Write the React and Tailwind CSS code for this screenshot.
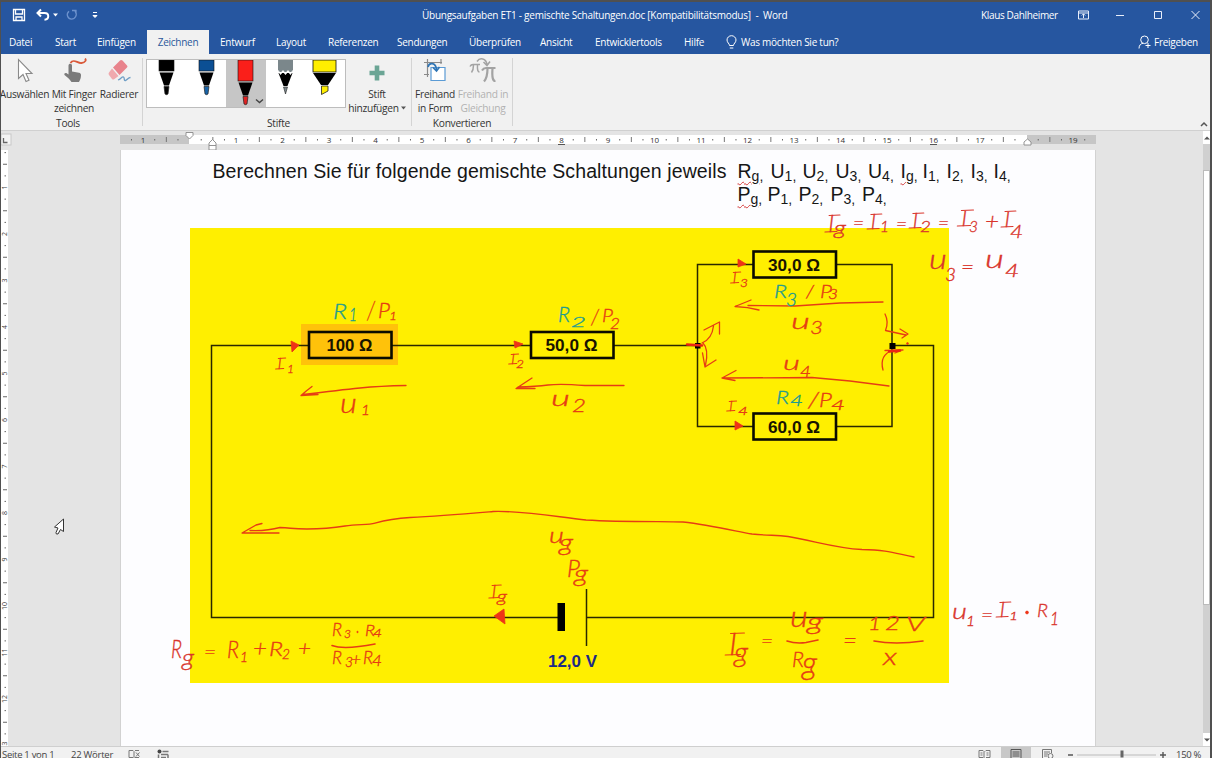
import React from "react";

const RED = "#e63c14";
const DARK = "#d9352c";
const TEAL = "#1f9c90";

const UI = "font-['Open_Sans',sans-serif]";

/* ---------- title bar and tabs ---------- */

function TitleBar() {
  return (
    <div className="flex h-[26px] shrink-0 items-center text-[10px] text-white">
      <svg className="ml-[11px] h-[14px] w-[86px] shrink-0" viewBox="0 0 86 14" fill="none" stroke="#fff">
        <path d="M1.500 1.500h11v11h-11zM3.500 1.500v4.500h7v-4.500M4 12.500v-3.500h6v3.500" strokeWidth="1.300" />
        <path d="M29 1.500l-3.500 3.500 3.500 3.500M26 5h6.500c5 0 5 6.500 0 6.800" strokeWidth="2" />
        <path d="M41 5.500h5l-2.500 3z" fill="#fff" stroke="none" />
        <path d="M57 3.200c-3.500 3-1 8 2.500 8s6.500-4.500 3.500-8M60 2.500h4v3.500" stroke="#6d92cd" strokeWidth="1.300" />
        <path d="M81 4.500h4M81 7.500h4l-2 2z" fill="#fff" strokeWidth="1" />
      </svg>
      <div className="ml-[324px] w-[366px] whitespace-pre tracking-[-0.26px]">
        Übungsaufgaben ET1 - gemischte Schaltungen.doc [Kompatibilitätsmodus]{"  -  "}Word
      </div>
      <div className="ml-[193px] w-[78px] whitespace-nowrap tracking-[-0.35px]">Klaus Dahlheimer</div>
      <svg className="ml-[19px] h-[14px] w-[130px] shrink-0" viewBox="0 0 130 14" fill="none" stroke="#e8eefa">
        <path d="M.5 3h10v8h-10zM.5 5h10M5.500 10v-4M3.800 7.500l1.700-1.700 1.700 1.700" strokeWidth="1" />
        <path d="M38 7.500h8M76.500 3.500h7v7h-7zM113.500 3l8 8M121.500 3l-8 8" strokeWidth="1" />
      </svg>
    </div>
  );
}

function Tab({ className, children }) {
  return <div className={"flex h-[24px] shrink-0 items-center whitespace-nowrap " + className}>{children}</div>;
}

function TabRow() {
  return (
    <div className="flex h-[26px] shrink-0 items-end text-[10px] tracking-[-0.26px] text-white">
      <Tab className="ml-2 w-[46px]">Datei</Tab>
      <Tab className="w-[42px]">Start</Tab>
      <Tab className="w-[50px]">Einfügen</Tab>
      <Tab className="w-[62px] justify-center bg-[#f1f1f1] text-[#2b579a]">Zeichnen</Tab>
      <Tab className="ml-[11px] w-[56px]">Entwurf</Tab>
      <Tab className="w-[52px]">Layout</Tab>
      <Tab className="w-[69px]">Referenzen</Tab>
      <Tab className="w-[72px]">Sendungen</Tab>
      <Tab className="w-[71px]">Überprüfen</Tab>
      <Tab className="w-[55px]">Ansicht</Tab>
      <Tab className="w-[89px]">Entwicklertools</Tab>
      <Tab className="w-[42px]">Hilfe</Tab>
      <Tab className="w-[412px]">
        <svg className="mr-[4px] h-[15px] w-[11px]" viewBox="0 0 11 15" fill="none" stroke="#fff">
          <path d="M3.500 10.500c0-2-2.500-2.800-2.500-5.500a4.500 4.300 0 0 1 9 0c0 2.700-2.500 3.500-2.500 5.500zM3.800 13h3.500" />
        </svg>
        Was möchten Sie tun?
      </Tab>
      <Tab className="">
        <svg className="mr-[3px] h-[14px] w-[13px]" viewBox="0 0 13 14" fill="none" stroke="#fff">
          <circle cx="6.500" cy="4.800" r="3.800" />
          <path d="M1 13.500c0-3.500 2-5 4-5.200M10 8v5M7.500 10.500h5" />
        </svg>
        Freigeben
      </Tab>
    </div>
  );
}

/* ---------- ribbon ---------- */

function Tool({ className, icon, children }) {
  return (
    <div className={"flex shrink-0 flex-col items-center text-center " + className}>
      <div className="flex h-[34px] items-center">{icon}</div>
      <div className="whitespace-nowrap leading-[13.5px]">{children}</div>
    </div>
  );
}

function Group({ className, label, children }) {
  return (
    <div className={"flex h-[76px] shrink-0 flex-col " + className}>
      <div className="flex h-[63px] shrink-0">{children}</div>
      <div className="text-center leading-[13px]">{label}</div>
    </div>
  );
}

function Separator() {
  return <div className="mt-1 h-[68px] w-px shrink-0 bg-[#d4d4d4]" />;
}

function Pen({ color, tip, kind, selected }) {
  const d = selected ? 10 : 0;
  return (
    <div className={"flex w-[39.500px] shrink-0 justify-center " + (selected ? "bg-[#c6c6c6]" : "")}>
      <svg className="h-[47px] w-[39px]" viewBox="0 0 39 47">
        {kind === "pen" && (
          <g>
            <rect x="12" y="0" width="15" height={11 + d} fill={color} stroke="#111" strokeWidth=".6" />
            <path transform={`translate(0 ${d})`} d="M12.500 12.500h14l-4.500 13h-5z" fill="#000" />
            <path transform={`translate(0 ${d})`} d="M17 26.500h5l-1 7.500q-1.500 1.300-3 0z" fill={tip} stroke="#222" strokeWidth=".7" />
          </g>
        )}
        {kind === "pencil" && (
          <g>
            <rect x="12" y="0" width="15" height="12" fill="#7b878b" />
            <path d="M12.500 13l14 0-5 13h-4z" fill="#000" />
            <path d="M12 10.500l2.500 3.500 2.500-3 2.500 3 2.500-3 2.500 3 2.500-3.500" fill="none" stroke="#fff" strokeWidth="1.200" />
            <path d="M17.500 27h4l-2 7z" fill="#7b878b" stroke="#222" strokeWidth=".6" />
          </g>
        )}
        {kind === "marker" && (
          <g>
            <rect x="8" y="0" width="23" height="12" fill="#ffee00" stroke="#111" strokeWidth=".8" />
            <path d="M8 13h23l-8 12h-7z" fill="#000" />
            <path d="M16.500 26h6.500v5l-6.500 3.500z" fill="#ffee00" stroke="#222" strokeWidth=".8" />
          </g>
        )}
        {selected && <path d="M30 39.500l3.500 3 3.500-3" fill="none" stroke="#444" strokeWidth="1.400" />}
      </svg>
    </div>
  );
}

function Ribbon() {
  return (
    <div className="flex h-[77px] shrink-0 border-b border-[#d0d0d0] bg-[#f1f1f1] text-[10.200px] tracking-[-0.28px] text-[#333]">
      <Group className="w-[141px] pr-[7px]" label="Tools">
        <Tool
          className="-ml-px w-[49px]"
          icon={
            <svg className="h-[26px] w-[18px]" viewBox="0 0 18 26">
              <path d="M2.500 1.500v19l4.500-4 3 7 3-1.300-3-6.700h6z" fill="#fff" stroke="#8a8a8a" strokeWidth="1.100" />
            </svg>
          }
        >
          Auswählen
        </Tool>
        <Tool
          className="ml-[2px] w-[46px]"
          icon={
            <svg className="h-[26px] w-[26px]" viewBox="0 0 26 26">
              <path d="M7.500 7.500c0-2.500 3.500-2.500 3.500 0v6l7 1.300c1.500.3 2 1.200 2 2.500 0 3-1 4.500-2 6.700h-7.500c-2-3-4-4.500-7-7-.8-1.500 1-2.500 2.500-1.500l1.500 1z" fill="#7b7b7b" />
              <path d="M9.500 5c3-5 7 .5 11 0s5-3 3.500-4.500" fill="none" stroke="#d9593a" strokeWidth="1.800" />
            </svg>
          }
        >
          Mit Finger
          <br />
          zeichnen
        </Tool>
        <Tool
          className="ml-[3px] w-[38px]"
          icon={
            <svg className="h-[26px] w-[26px]" viewBox="0 0 26 26">
              <path d="M14 2.500q1-1 2.500 0l4.500 5q1 1 0 2l-7.500 7.500-6.500-7.500z" fill="#e8838c" />
              <path d="M6 10.500l6.500 7.500-4 3q-1.500 1-2.500 0l-3-4q-1-1.500 0-2.500z" fill="#f0a9ae" />
              <path d="M12 22c3-1 4-4 5.500-3s0 4 2 3.500 2.500-3 5-3" fill="none" stroke="#6f9fc6" strokeWidth="1.300" />
            </svg>
          }
        >
          Radierer
        </Tool>
      </Group>
      <Separator />
      <Group className="w-[268px] pl-[3px]" label="Stifte">
        <div className="mt-[5px] flex h-[49px] w-[200px] border border-[#bdbdbd] bg-white">
          <Pen kind="pen" color="#000" tip="#000" />
          <Pen kind="pen" color="#0b4f94" tip="#1964a8" />
          <Pen kind="pen" color="#fa1f1a" tip="#e02222" selected />
          <Pen kind="pencil" />
          <Pen kind="marker" />
        </div>
        <Tool
          className="ml-[2px] w-[58px]"
          icon={
            <svg className="mt-1 h-[16px] w-[16px]" viewBox="0 0 16 16">
              <path d="M8 .5v15M.5 8h15" stroke="#6ba595" strokeWidth="4.600" />
            </svg>
          }
        >
          Stift
          <br />
          <span className="flex items-center gap-[2px]">
            hinzufügen
            <svg className="h-[4px] w-[5px]" viewBox="0 0 5 4">
              <path d="M0 .5h5L2.500 3.500z" fill="#555" />
            </svg>
          </span>
        </Tool>
      </Group>
      <Separator />
      <Group className="w-[100px]" label="Konvertieren">
        <Tool
          className="ml-px w-[44px]"
          icon={
            <svg className="h-[26px] w-[24px]" viewBox="0 0 24 26" fill="none">
              <path d="M4.500 1v18M1 4.500h18M18 1v5M1 16.500h5" stroke="#8a8a8a" strokeWidth="1.200" />
              <path d="M8 9.500h10l4 0v13h-14z" fill="#fff" stroke="#5b9bd5" strokeWidth="1.200" />
              <path d="M5 9c1-5 8-5 8.500 3M10 9.500l3.500 3.500 3-4" stroke="#2f75b5" strokeWidth="1.700" />
            </svg>
          }
        >
          Freihand
          <br />
          in Form
        </Tool>
        <Tool
          className="ml-px w-[50px] text-[#b1b1b1]"
          icon={
            <svg className="h-[28px] w-[28px]" viewBox="0 0 28 28" fill="none" stroke="#a3a3a3">
              <path d="M1 9.500q1-2 3-2h7M4.500 8q0 5-2 7.500M8.500 8q-.5 7 2 7" strokeWidth="1.500" />
              <path d="M13 13.500q1.500-2.500 4-2.500h9.500M18.500 11.500q0 9-3.500 13M23.500 11.500q-1 13 3 12.500" strokeWidth="2.200" />
              <path d="M8 4.500c3-4.500 9-3 10 3M14.500 5l3.500 3.500 3-4" strokeWidth="1.500" />
            </svg>
          }
        >
          Freihand in
          <br />
          Gleichung
        </Tool>
      </Group>
      <Separator />
      <div className="flex flex-1 items-end justify-end pr-[2px] pb-[3px]">
        <svg className="h-[6px] w-[8px]" viewBox="0 0 8 6">
          <path d="M1 5l3-3 3 3" fill="none" stroke="#555" strokeWidth="1.500" />
        </svg>
      </div>
    </div>
  );
}

/* ---------- rulers ---------- */

const CM = 46.5;

function HorizontalRuler() {
  const marks = [];
  for (let q = -6; q <= 77; q++) {
    const x = 189.600 + (q * CM) / 4;
    if (q === 0 || x < 120 || x > 1094) continue;
    if (q % 4 === 0) {
      const n = Math.abs(q / 4);
      if (n !== 18) marks.push(<text key={q} x={x} y="142.500" textAnchor="middle">{n}</text>);
    } else if (q % 2 === 0) marks.push(<path key={q} d={`M${x} 137v5`} stroke="#777" />);
    else marks.push(<path key={q} d={`M${x} 139v1.500`} stroke="#666" />);
  }
  return (
    <svg className="h-[19px] w-[1202px] shrink-0" viewBox="1 131 1202 19">
      <rect x="1" y="134" width="10" height="11" fill="#f4f4f4" stroke="#c8c8c8" />
      <path d="M3.500 138v4.500h4" fill="none" stroke="#666" strokeWidth="1.300" />
      <rect x="120" y="135" width="976" height="9" fill="#c6c6c6" />
      <rect x="189" y="135" width="838" height="9" fill="#fff" />
      <g fontFamily="Open Sans, sans-serif" fontSize="8" fill="#333">{marks}</g>
      <path d="M558 144.500h7M930 144.500h7" stroke="#555" />
      <path d="M186 132.500h7v3l-3.500 3.500-3.500-3.500z" fill="#fff" stroke="#888" strokeWidth=".9" />
      <path d="M209 150v-7l3.500-3.500 3.500 3.500v7zM209 145.500h7" fill="#fff" stroke="#888" strokeWidth=".9" />
      <path d="M1024 145v-3l3.500-3 3.500 3v3z" fill="#fff" stroke="#888" strokeWidth=".9" />
    </svg>
  );
}

function VerticalRuler() {
  const marks = [];
  for (let q = 1; q <= 52; q++) {
    const y = 141 + (q * CM) / 4;
    if (y < 151) continue;
    if (q % 4 === 0)
      marks.push(
        <text key={q} transform={`translate(7.300 ${y}) rotate(-90)`} textAnchor="middle">
          {q / 4}
        </text>
      );
    else if (q % 2 === 0) marks.push(<path key={q} d={`M3 ${y}h4`} stroke="#666" />);
    else marks.push(<path key={q} d={`M4.500 ${y}h1.500`} stroke="#666" />);
  }
  return (
    <svg className="h-[596px] w-[7px] shrink-0 bg-white" viewBox="1 150 7 596">
      <g fontFamily="Open Sans, sans-serif" fontSize="7" fill="#444">{marks}</g>
    </svg>
  );
}

/* ---------- circuit and ink notes ---------- */

/* Each note is [text, left, top, right, bottom, colour]. */
const NOTES = [
  ["R", 333, 303, 347, 319, TEAL], ["1", 349, 309, 357, 321, TEAL],
  ["/", 367, 301, 375, 320, RED], ["P", 378, 303, 390, 318, RED], ["1", 389, 311, 397, 320, RED],
  ["I", 275, 358, 287, 369, RED], ["1", 287, 364, 294, 373, RED],
  ["u", 340, 399, 357, 413, RED], ["1", 361, 405, 370, 415, RED],
  ["R", 558, 307, 570, 322, TEAL], ["2", 571, 317, 586, 327, TEAL],
  ["/", 591, 309, 599, 325, RED], ["P", 602, 309, 613, 322, RED], ["2", 610, 318, 620, 329, RED],
  ["I", 508, 354, 520, 364, RED], ["2", 516, 359, 524, 368, RED],
  ["u", 551, 395, 570, 406, RED], ["2", 572, 400, 586, 412, RED],
  ["I", 824, 215, 842, 232, DARK], ["g", 834, 224, 846, 239, DARK], ["=", 853, 223, 864, 0, DARK],
  ["I", 866, 214, 884, 229, DARK], ["1", 880, 221, 889, 232, DARK], ["=", 896, 224, 907, 0, DARK],
  ["I", 908, 213, 926, 228, DARK], ["2", 920, 221, 931, 232, DARK], ["=", 938, 223, 949, 0, DARK],
  ["I", 956, 210, 976, 226, DARK], ["3", 969, 221, 978, 232, DARK], ["+", 985, 221, 999, 0, DARK],
  ["I", 1000, 211, 1018, 227, DARK], ["4", 1010, 225, 1023, 238, DARK],
  ["u", 929, 255, 947, 269, DARK], ["3", 945, 269, 956, 281, DARK], ["=", 961, 266, 974, 0, DARK],
  ["u", 985, 255, 1004, 268, DARK], ["4", 1005, 265, 1019, 277, DARK],
  ["I", 730, 272, 742, 283, RED], ["3", 740, 278, 748, 287, RED],
  ["R", 774, 285, 787, 298, TEAL], ["3", 786, 294, 797, 306, TEAL],
  ["/", 806, 286, 814, 298, RED], ["P", 820, 285, 832, 298, RED], ["3", 828, 289, 838, 299, RED],
  ["u", 791, 318, 810, 329, RED], ["3", 810, 321, 823, 334, RED],
  ["u", 783, 360, 800, 370, RED], ["4", 800, 366, 811, 377, RED],
  ["R", 776, 391, 789, 404, TEAL], ["4", 790, 395, 803, 406, TEAL],
  ["/", 808, 393, 819, 408, RED], ["P", 819, 393, 832, 407, RED], ["4", 831, 400, 845, 410, RED],
  ["I", 726, 401, 738, 411, RED], ["4", 738, 406, 748, 415, RED],
  ["u", 549, 532, 564, 543, RED], ["g", 559, 538, 573, 556, RED],
  ["P", 567, 560, 580, 577, RED], ["g", 574, 570, 588, 587, RED],
  ["I", 488, 585, 503, 598, RED], ["g", 497, 593, 507, 605, RED],
  ["R", 171, 640, 182, 658, DARK], ["g", 182, 653, 194, 671, DARK], ["=", 204, 652, 216, 0, RED],
  ["R", 227, 641, 239, 658, RED], ["1", 240, 652, 248, 662, RED], ["+", 253, 648, 267, 0, RED],
  ["R", 269, 642, 283, 656, RED], ["2", 282, 649, 290, 659, RED], ["+", 298, 648, 311, 0, RED],
  ["R", 332, 624, 342, 636, RED], ["3", 344, 629, 351, 638, RED], ["R", 365, 625, 375, 636, RED], ["4", 373, 628, 382, 637, RED],
  ["R", 332, 652, 342, 664, RED], ["3", 345, 657, 353, 667, RED], ["+", 351, 659, 361, 0, RED],
  ["R", 363, 652, 373, 664, RED], ["4", 372, 655, 382, 666, RED],
  ["I", 724, 633, 747, 655, RED], ["g", 734, 648, 748, 668, RED], ["=", 761, 641, 773, 0, RED],
  ["u", 790, 612, 808, 627, RED], ["g", 807, 618, 823, 635, RED],
  ["R", 792, 651, 804, 667, RED], ["g", 802, 658, 817, 681, RED], ["=", 843, 641, 857, 0, RED],
  ["1", 868, 617, 881, 630, RED], ["2", 885, 616, 900, 630, RED], ["V", 906, 617, 925, 631, RED],
  ["x", 883, 653, 897, 665, RED],
  ["u", 952, 608, 967, 619, DARK], ["1", 966, 616, 975, 626, DARK], ["=", 981, 615, 993, 0, DARK],
  ["I", 995, 602, 1013, 617, DARK], ["1", 1009, 611, 1018, 620, DARK],
  ["R", 1037, 604, 1048, 617, DARK], ["1", 1050, 613, 1059, 625, DARK],
];

function Note({ note }) {
  const [text, left, top, right, bottom, color] = note;
  const width = right - left;
  const height = bottom - top;
  let size = height / 0.72;
  let base = bottom;
  let x = left;
  let fit = { textLength: width, lengthAdjust: "spacingAndGlyphs" };
  let bars = null;
  if (text === "=" || text === "+") {
    size = width / 0.6;
    base = top + size * 0.35;
  } else if (text === "g") {
    size = height / 0.74;
    base = bottom - size * 0.21;
  } else if (text === "u" || text === "x") {
    size = height / 0.52;
  } else if (text === "I") {
    const mid = (left + right) / 2;
    const lean = height * 0.09;
    const half = width * 0.3;
    x = mid - size * 0.14 - lean;
    fit = {};
    bars = (
      <path
        d={`M${mid + lean - half} ${top + 0.5}L${mid + lean + half} ${top}M${mid - lean - half * 1.2} ${bottom}L${mid - lean + half} ${bottom - 0.5}`}
        fill="none"
        strokeWidth="1.200"
      />
    );
  }
  return (
    <g fill={color} stroke={color} strokeWidth=".35" strokeLinecap="round">
      <text x={x} y={base} fontFamily="Lato, sans-serif" fontSize={size} fontStyle="italic" fontWeight="300" {...fit}>
        {text}
      </text>
      {bars}
    </g>
  );
}

function Resistor({ x, y, label }) {
  return (
    <g>
      <rect x={x + 1} y={y + 1} width="82.500" height="26" fill="none" stroke="#0a0a00" strokeWidth="2.600" />
      <text x={x + 41.500} y={y + 20.200} textAnchor="middle" fontSize="17" fill="#181400" textLength={label.length > 5 ? 52 : 46} lengthAdjust="spacingAndGlyphs">
        {label}
      </text>
    </g>
  );
}

function Circuit() {
  return (
    <svg className="h-[455px] w-[759px] overflow-visible" viewBox="190 228 759 455">
      <rect x="301" y="324" width="97" height="41" fill="#ffc20a" />
      <g fill="none" stroke="#2a2800" strokeWidth="1.500">
        <path d="M308 345.500H211.500V617.500H558" />
        <path d="M392 345.500H530M614 345.500H698" />
        <path d="M753 264.500H697.500V426.500H753" />
        <path d="M836 264.500H892V426.500H836" />
        <path d="M892 345.500H933.500V617.500H586.500" />
        <path d="M586.500 589V646" />
      </g>
      <rect x="557.500" y="603" width="7.500" height="28" fill="#000" />
      <rect x="695" y="343" width="5.500" height="5.500" fill="#000" />
      <rect x="889.500" y="343" width="6" height="6" fill="#000" />
      <g fontFamily="Liberation Sans, sans-serif" fontWeight="700">
        <Resistor x={308} y={331} label="100 Ω" />
        <Resistor x={530} y={331} label="50,0 Ω" />
        <Resistor x={752.500} y={250.500} label="30,0 Ω" />
        <Resistor x={752.500} y={412.500} label="60,0 Ω" />
        <text x="548" y="667" fontSize="17" fill="#1c2a86" textLength="49" lengthAdjust="spacingAndGlyphs">
          12,0 V
        </text>
      </g>
      <g fill="none" stroke={RED} strokeWidth="1.300" strokeLinecap="round" strokeLinejoin="round">
        <path d="M406 385.500Q380 386 360 388T303 394.500M312 386.500Q306 391 301 395.500L318 394.500" />
        <path d="M624 385.500H585Q560 383.500 548 385T518 387M532 378L516 388.500 535 388.500" />
        <path d="M883 302L840 303 795 306 748 305.500M751 300L735 306.500Q748 307 759 310" />
        <path d="M889 386L850 381 812 377.500 722 378M736 370.500L722 378 735 380.500" />
        <path d="M702 343Q712 339 713.500 326M704 330L719.500 322V334" />
        <path d="M703 343Q709 349 705.500 365M702.500 353L705 367 716 360" />
        <path d="M885 314Q889 322 885.500 330.500L906 335M900 329L908 334 902 338" />
        <path d="M883 370Q879 355 893 350M885 350.500L903 350 895 353" />
        <path d="M262 523.500L256 525 242 533H279" />
        <path d="M250 530.500C262 531 271 530 280 527.500C292 528 292 529 307 529C322 529 333 528 345 526C358 524 368 525 375 523C390 519 402 518 410 517.500C440 516 475 513 493 511.500C525 510.500 557 517 586 520C620 522 660 521.500 683 522C710 525 735 531 752 534C770 536 775 534.500 788 536.500C815 541 835 548 862 549.500C888 550 894 553 914 557" />
        <path d="M332 645.500Q344 650 375 644M787 641Q796 644 806 642.500L818 640M874 641Q895 645 923 641" strokeWidth="1.600" />
        <path d="M687 344.500L702 345.500M889 351.500L900 350.500" stroke="#ec2415" strokeWidth="2.500" />
      </g>
      <g fill="#ee3417" stroke="#ee3417" strokeWidth=".8">
        <path d="M291 341L299 345 292 352z" />
        <path d="M514 341L523 344 515 348z" />
        <path d="M738 259L746 264 738 267z" />
        <path d="M735 421L743 426 735 430z" />
        <path d="M494 616L504 609 505 624z" />
        <circle cx="907.500" cy="343.500" r=".9" />
        <circle cx="357.500" cy="632" r=".7" />
        <circle cx="1027" cy="612.500" r="1.400" />
      </g>
      <g>
        {NOTES.map((note, i) => (
          <Note key={i} note={note} />
        ))}
      </g>
    </svg>
  );
}

/* ---------- document ---------- */

function Symbol({ className, letter, index, wavy }) {
  return (
    <span className={"flex shrink-0 items-baseline " + className}>
      <span className={wavy ? "underline decoration-[#d43b3b] decoration-wavy decoration-[0.8px] underline-offset-[3px]" : ""}>
        {letter}
        <span className="relative top-[3px] text-[14px] leading-none">{index}</span>
      </span>
      <span className="relative top-[3px] text-[14px] leading-none">,</span>
    </span>
  );
}

function Page() {
  return (
    <div className="flex w-[976px] shrink-0 flex-col border-x border-[#d2d2d2] bg-[#fdfdff] pt-[10px] pl-[69px]">
      <div className="flex h-[23px] shrink-0 items-baseline whitespace-nowrap pl-[22.500px] font-['Liberation_Sans',Arial,sans-serif] text-[19.500px] leading-[23px] text-[#161616]">
        <div className="w-[525px] tracking-[0.1px]">Berechnen Sie für folgende gemischte Schaltungen jeweils</div>
        <Symbol className="w-[33px]" letter="R" index="g" wavy />
        <Symbol className="w-[32px]" letter="U" index="1" />
        <Symbol className="w-[33px]" letter="U" index="2" />
        <Symbol className="w-[32.500px]" letter="U" index="3" />
        <Symbol className="w-[32.500px]" letter="U" index="4" />
        <Symbol className="w-[22px]" letter="I" index="g" wavy />
        <Symbol className="w-[24px]" letter="I" index="1" />
        <Symbol className="w-[24px]" letter="I" index="2" />
        <Symbol className="w-[23px]" letter="I" index="3" />
        <Symbol className="" letter="I" index="4" />
      </div>
      <div className="flex h-[45px] shrink-0 items-baseline whitespace-nowrap pl-[547.500px] font-['Liberation_Sans',Arial,sans-serif] text-[19.500px] leading-[23px] text-[#161616]">
        <Symbol className="w-[30px]" letter="P" index="g" wavy />
        <Symbol className="w-[31px]" letter="P" index="1" />
        <Symbol className="w-[32px]" letter="P" index="2" />
        <Symbol className="w-[31.500px]" letter="P" index="3" />
        <Symbol className="" letter="P" index="4" />
      </div>
      <div className="h-[455px] w-[759px] shrink-0 bg-[#ffef00]">
        <Circuit />
      </div>
    </div>
  );
}

function Cursor() {
  return (
    <svg className="mt-[368px] ml-[45px] h-[18px] w-[13px]" viewBox="0 0 13 18">
      <path d="M10.500 1v12.500l-3-2-2.500 4.500q-2.500.5-2-1.500l2-4.500-3.500-1z" fill="#fff" stroke="#333" strokeWidth="1" />
    </svg>
  );
}

function Scrollbar() {
  return (
    <div className="flex w-[7px] shrink-0 flex-col bg-[#d0d0d0]">
      <div className="flex h-[13px] items-center justify-center bg-white">
        <svg className="h-[4px] w-[6px]" viewBox="0 0 6 4">
          <path d="M0 3.500h6l-3-3z" fill="#555" />
        </svg>
      </div>
      <div className="mt-[26px] h-[435px] border border-[#bbb] bg-white" />
      <div className="mt-auto flex h-[13px] items-center justify-center bg-white">
        <svg className="h-[4px] w-[6px]" viewBox="0 0 6 4">
          <path d="M0 .5h6l-3 3z" fill="#555" />
        </svg>
      </div>
    </div>
  );
}

function StatusBar() {
  return (
    <div className="flex h-[12px] shrink-0 items-start overflow-hidden border-t border-[#cfcfcf] bg-[#f1f1f1] text-[9.500px] leading-[15px] text-[#444]">
      <div className="w-[70px] whitespace-nowrap pl-px tracking-[-0.3px]">Seite 1 von 1</div>
      <div className="w-[57px] whitespace-nowrap tracking-[-0.25px]">22 Wörter</div>
      <svg className="mt-[2px] h-[10px] w-[42px] shrink-0" viewBox="0 0 42 10" fill="none" stroke="#777">
        <path d="M1 1.500h4l1 1v7M1 1.500v7h4M7 1.500h4M7 8.500h4M8 3.500l3.500 4M11.500 3.500l-3.500 4" />
        <path d="M34.500 2.500h6M30.500 5.500v4M33 5.500h7M40 5.500v4M33 8.500h5" strokeWidth="1.500" />
        <circle cx="31.500" cy="2.500" r="2" fill="#444" stroke="none" />
      </svg>
      <svg className="mt-[2px] ml-auto h-[10px] w-[14px]" viewBox="0 0 14 10" fill="none" stroke="#777">
        <path d="M1 1.500h4l1 1v7M1 1.500v7h4M12 1.500h-4l-1 1M12 1.500v7h-4M2.500 4h2M2.500 6h2M8.500 4h2M8.500 6h2" />
      </svg>
      <div className="ml-[9px] flex h-[12px] w-[30px] justify-center bg-[#c8c8c8]">
        <svg className="mt-[2px] h-[10px] w-[12px]" viewBox="0 0 12 10" fill="none" stroke="#555">
          <path d="M1 .5h10v10h-10zM2.500 3h7M2.500 5h7M2.500 7h7" />
        </svg>
      </div>
      <svg className="mt-[2px] ml-[11px] h-[10px] w-[12px]" viewBox="0 0 12 10" fill="none" stroke="#777">
        <path d="M9.500 4v-3.500h-9v9M2 3h6M2 5h4M2 7h3" />
        <circle cx="8.500" cy="7" r="2.500" />
      </svg>
      <svg className="ml-[13px] h-[12px] w-[102px]" viewBox="1067 747 102 12" fill="none">
        <path d="M1068 755h5M1160 755h6M1163 752v6" stroke="#555" strokeWidth="1.400" />
        <path d="M1077 755h79" stroke="#bbb" />
        <path d="M1122 750.500v7" stroke="#666" strokeWidth="3" />
      </svg>
      <div className="ml-[7px] w-[34px] whitespace-nowrap tracking-[-0.3px]">150 %</div>
    </div>
  );
}

export default function App() {
  return (
    <div className={"flex h-[758px] w-[1212px] flex-col overflow-hidden border-t-2 border-r-2 border-l border-[#505050] bg-[#e4e4e4] " + UI}>
      <div className="flex h-[52px] shrink-0 flex-col bg-[#2656a0]">
        <TitleBar />
        <TabRow />
      </div>
      <Ribbon />
      <div className="flex h-[615px] shrink-0">
        <div className="flex w-[1202px] shrink-0 flex-col">
          <HorizontalRuler />
          <div className="flex h-[596px] shrink-0">
            <VerticalRuler />
            <div className="w-[112px] shrink-0">
              <Cursor />
            </div>
            <Page />
          </div>
        </div>
        <Scrollbar />
      </div>
      <StatusBar />
    </div>
  );
}
